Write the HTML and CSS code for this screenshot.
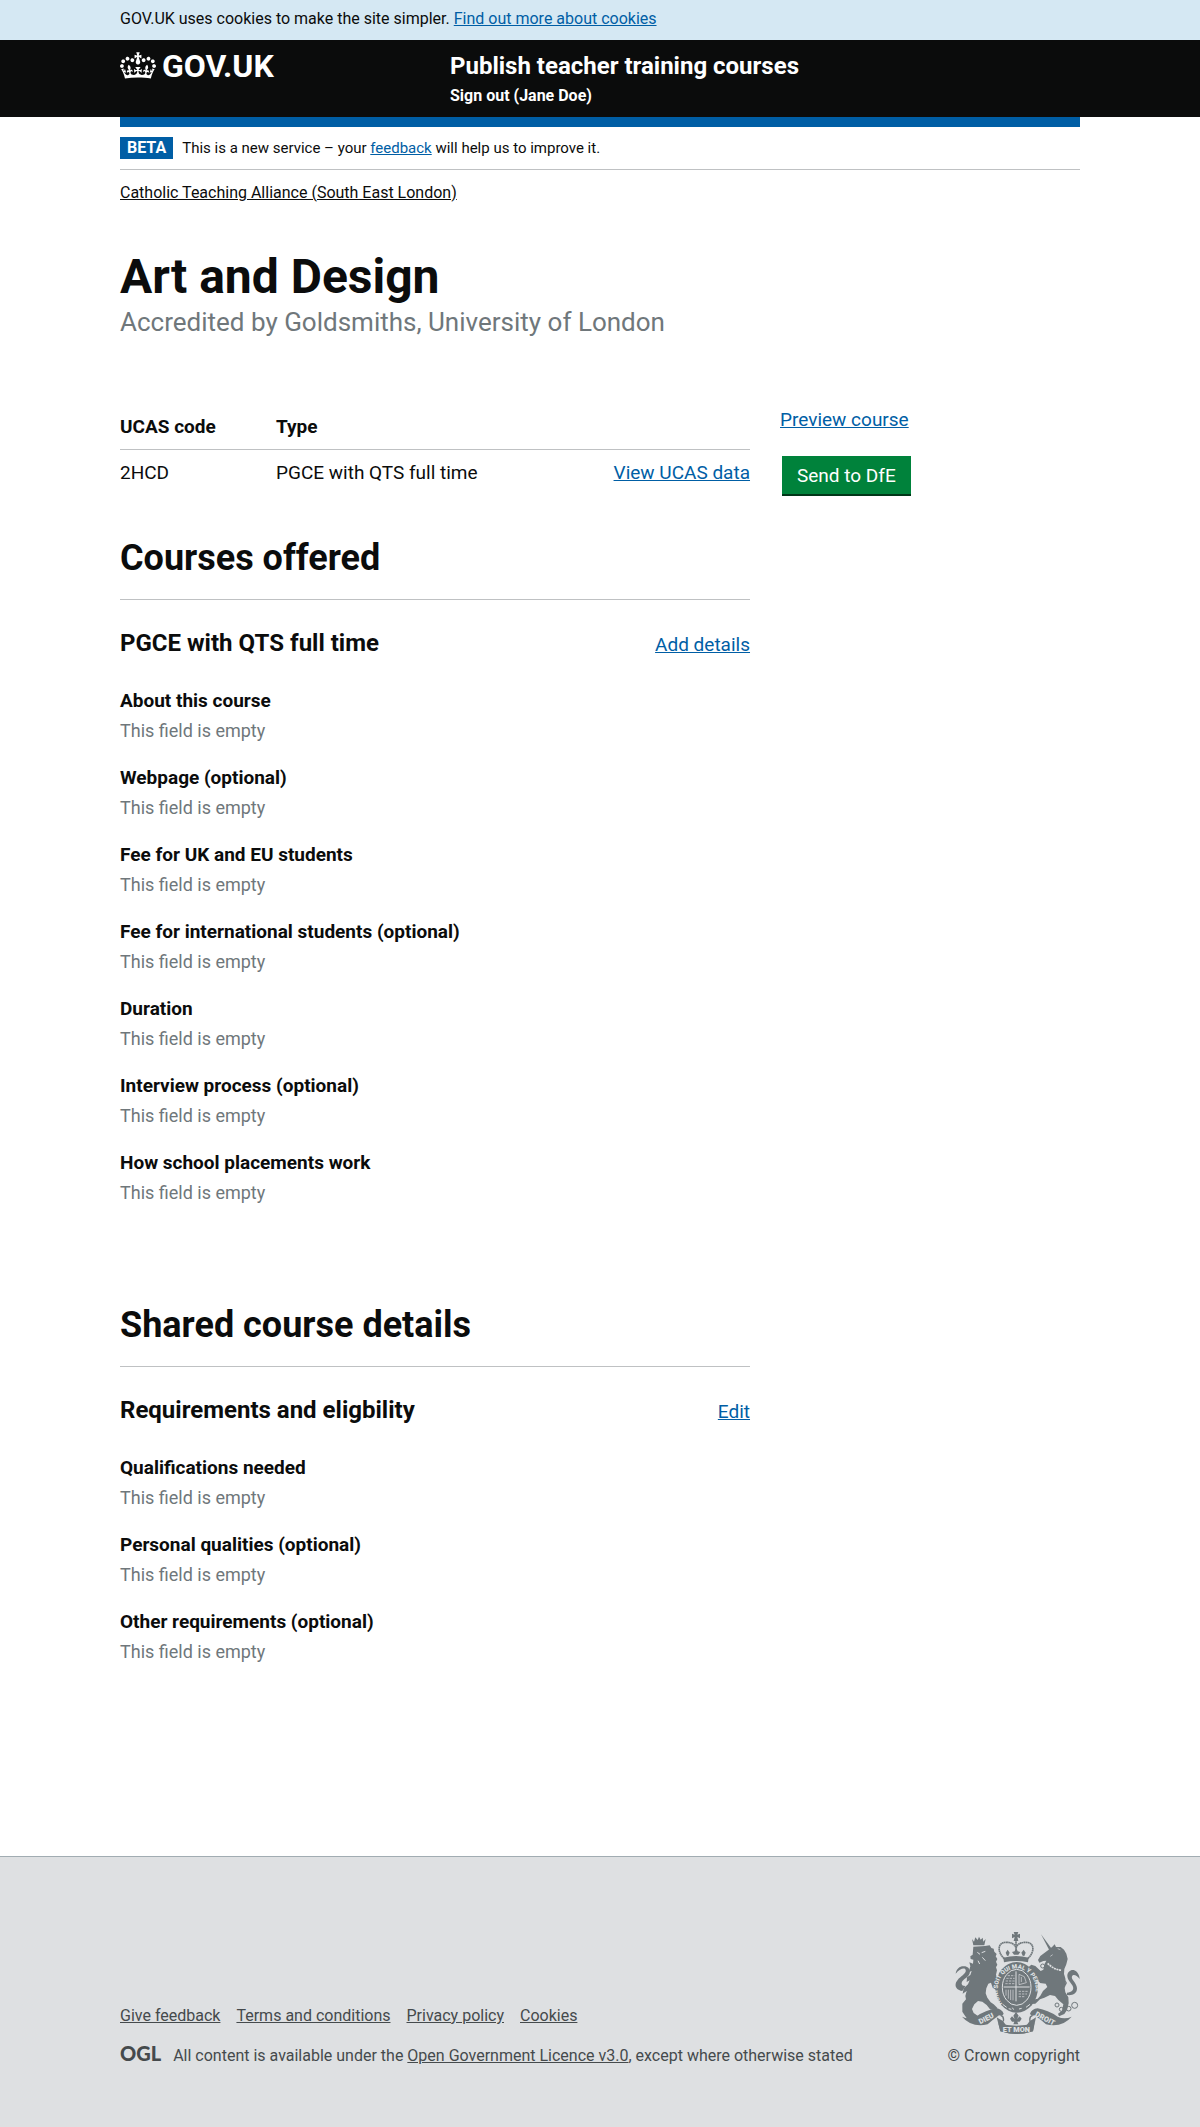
FILE: index.html
```html
<!DOCTYPE html>
<html lang="en">
<head>
<meta charset="utf-8">
<meta name="viewport" content="width=device-width, initial-scale=1">
<title>Art and Design – Publish teacher training courses</title>
<link rel="stylesheet" href="styles.css">
</head>
<body>
<div class="cookie-bar">
  <p class="container">GOV.UK uses cookies to make the site simpler. <a class="link" href="#">Find out more about cookies</a></p>
</div>

<header class="header">
  <div class="container header-grid">
    <a class="logo" href="#">
      <svg class="crown" viewBox="0 0 132 97" aria-hidden="true"><path fill="currentColor" fill-rule="evenodd" d="M25 30.2c3.5 1.5 7.7-.2 9.1-3.7 1.5-3.6-.2-7.8-3.9-9.2-3.6-1.4-7.6.3-9.1 3.9-1.4 3.5.3 7.5 3.9 9zM9 39.5c3.6 1.5 7.8-.2 9.2-3.7 1.5-3.6-.2-7.8-3.9-9.1-3.6-1.5-7.6.2-9.1 3.8-1.4 3.5.3 7.5 3.8 9zM4.4 57.2c3.5 1.5 7.7-.2 9.1-3.8 1.5-3.6-.2-7.7-3.9-9.1-3.5-1.5-7.6.3-9.1 3.8-1.4 3.5.3 7.6 3.9 9.1zm38.3-21.4c3.5 1.5 7.7-.2 9.1-3.8 1.5-3.6-.2-7.7-3.9-9.1-3.6-1.5-7.6.3-9.1 3.8-1.3 3.6.4 7.7 3.9 9.1zm64.4-5.6c-3.6 1.5-7.8-.2-9.1-3.7-1.5-3.6.2-7.8 3.8-9.2 3.6-1.4 7.7.3 9.2 3.9 1.3 3.5-.4 7.5-3.9 9zm15.9 9.3c-3.6 1.5-7.7-.2-9.1-3.7-1.5-3.6.2-7.8 3.7-9.1 3.6-1.5 7.7.2 9.2 3.8 1.5 3.5-.3 7.5-3.8 9zm4.7 17.7c-3.6 1.5-7.8-.2-9.2-3.8-1.5-3.6.2-7.7 3.9-9.1 3.6-1.5 7.7.3 9.2 3.8 1.3 3.5-.4 7.6-3.9 9.1zM89.3 35.8c-3.6 1.5-7.8-.2-9.2-3.8-1.4-3.6.2-7.7 3.9-9.1 3.6-1.5 7.7.3 9.2 3.8 1.4 3.6-.3 7.7-3.9 9.1zM69.7 17.7l8.9 4.7V9.3l-8.9 2.8c-.2-.3-.5-.6-.9-.9L72.4 0H59.6l3.5 11.2c-.3.3-.6.5-.9.9l-8.8-2.8v13.1l8.8-4.7c.3.3.6.7.9.9l-5 15.4v.1c-.2.8-.4 1.6-.4 2.4 0 4.1 3.1 7.5 7 8.1h.2c.3 0 .7.1 1 .1.4 0 .7 0 1-.1h.2c4-.6 7.1-4.1 7.1-8.1 0-.8-.1-1.7-.4-2.4V34l-5.1-15.4c.4-.2.7-.6 1-.9zM66 92.8c16.9 0 32.8 1.1 47.1 3.2 4-16.9 8.9-26.7 14-33.5l-9.6-3.4c1 4.9 1.1 7.2 0 10.2-1.5-1.4-3-4.3-4.2-8.7L108.6 76c2.8-2 5-3.2 7.5-3.3-4.4 9.4-10 11.9-13.6 11.2-4.3-.8-6.3-4.6-5.6-7.9 1-4.7 5.7-5.9 8-.5 4.3-8.7-3-11.4-7.6-8.8 7.1-7.2 7.9-13.5 2.1-21.1-8 6.1-8.1 12.3-4.5 20.8-4.7-5.4-12.1-2.5-9.5 6.2 3.4-5.2 7.9-2 7.2 3.1-.6 4.3-6.4 7.8-13.5 7.2-10.3-.9-10.9-8-11.2-13.8 2.5-.5 7.1 1.8 11 7.3L80.2 60c-4.1 4.4-8 5.3-12.3 5.4 1.4-4.4 8-11.6 8-11.6H55.5s6.4 7.2 7.9 11.6c-4.2-.1-8-1-12.3-5.4l1.4 16.4c3.9-5.5 8.5-7.7 10.9-7.3-.3 5.8-.9 12.8-11.1 13.8-7.2.6-12.9-2.9-13.5-7.2-.7-5 3.8-8.3 7.1-3.1 2.7-8.7-4.6-11.6-9.4-6.2 3.7-8.5 3.6-14.7-4.6-20.8-5.8 7.6-5 13.9 2.2 21.1-4.7-2.6-11.9.1-7.7 8.8 2.3-5.5 7.1-4.2 8.1.5.7 3.3-1.3 7.1-5.7 7.9-3.5.7-9-1.8-13.5-11.2 2.5.1 4.7 1.3 7.5 3.3l-4.7-15.4c-1.2 4.4-2.7 7.2-4.3 8.7-1.1-3-.9-5.3 0-10.2l-9.5 3.4c5 6.9 9.9 16.7 14 33.5 14.8-2.1 30.8-3.2 47.7-3.2z"/></svg>
      <span>GOV.UK</span>
    </a>
    <div class="header-content">
      <a class="service-name" href="#">Publish teacher training courses</a>
      <a class="sign-out" href="#">Sign out (Jane Doe)</a>
    </div>
  </div>
</header>

<div class="container">
  <div class="phase-banner">
    <strong class="tag">BETA</strong>
    <span>This is a new service – your <a class="link" href="#">feedback</a> will help us to improve it.</span>
  </div>
  <nav class="breadcrumb"><a href="#">Catholic Teaching Alliance (South East London)</a></nav>

  <main>
    <h1 class="title">Art and Design</h1>
    <p class="caption">Accredited by Goldsmiths, University of London</p>

    <div class="columns">
      <div class="primary">
        <table class="summary">
          <thead>
            <tr><th scope="col" class="code">UCAS code</th><th scope="col">Type</th><td></td></tr>
          </thead>
          <tbody>
            <tr><td>2HCD</td><td>PGCE with QTS full time</td><td class="action"><a class="link" href="#">View UCAS data</a></td></tr>
          </tbody>
        </table>

        <section class="section">
          <h2 class="section-title">Courses offered</h2>
          <div class="subhead"><h3>PGCE with QTS full time</h3><a class="link" href="#">Add details</a></div>
          <dl class="fields">
            <div><dt>About this course</dt><dd>This field is empty</dd></div>
            <div><dt>Webpage (optional)</dt><dd>This field is empty</dd></div>
            <div><dt>Fee for UK and EU students</dt><dd>This field is empty</dd></div>
            <div><dt>Fee for international students (optional)</dt><dd>This field is empty</dd></div>
            <div><dt>Duration</dt><dd>This field is empty</dd></div>
            <div><dt>Interview process (optional)</dt><dd>This field is empty</dd></div>
            <div><dt>How school placements work</dt><dd>This field is empty</dd></div>
          </dl>
        </section>

        <section class="section">
          <h2 class="section-title">Shared course details</h2>
          <div class="subhead"><h3>Requirements and eligbility</h3><a class="link" href="#">Edit</a></div>
          <dl class="fields">
            <div><dt>Qualifications needed</dt><dd>This field is empty</dd></div>
            <div><dt>Personal qualities (optional)</dt><dd>This field is empty</dd></div>
            <div><dt>Other requirements (optional)</dt><dd>This field is empty</dd></div>
          </dl>
        </section>
      </div>

      <aside class="side">
        <a class="link" href="#">Preview course</a>
        <button class="button" type="button">Send to DfE</button>
      </aside>
    </div>
  </main>
</div>

<footer class="footer">
  <div class="container footer-grid">
    <div class="footer-meta">
      <ul class="footer-links">
        <li><a href="#">Give feedback</a></li>
        <li><a href="#">Terms and conditions</a></li>
        <li><a href="#">Privacy policy</a></li>
        <li><a href="#">Cookies</a></li>
      </ul>
      <div class="licence">
        <span class="ogl">OGL</span>
        <span>All content is available under the <a href="#">Open Government Licence v3.0</a>, except where otherwise stated</span>
      </div>
    </div>
    <a class="copyright" href="#">
      <svg class="crest" viewBox="75 66 375 306" aria-hidden="true">
        <defs>
          <path id="garter" d="M220 284 C190 252 198 181 260 175 C322 181 330 252 300 284"/>
        </defs>
        <g fill="#6f777b">
          <!-- lion -->
          <path d="M126 87l6 8 4-13 7 8 4-10 5 9 6-6 2 12 7-8-4 19h-33z"/>
          <path d="M130 110l35-2 14-2 5 8 7 2 2 9 7 7-3 7 5 8-4 8 4 9-4 8 3 9-3 13 4 12 3 8-8 2 7 10-4 15-12-8-5-15-8 3-6 14-2 15 5 13 10 14 9 6 12 12-9 6-14-3-10-13-13-10-13-2-11 10-7 14 5 12 14 10 4 10-18 3-17-2-9-13-8-12v-24l11-13-2-10 4-15-12 8 3-16 13-12 5-12-9 5 1-14 10-7 4-12-9 4 5-18-3-12 11 4 1-12-8-2-1-8 7-5z"/>
          <path d="M97 243c-24-4-24-22-14-33 9-12 27-19 24-30-3-8-16-5-30 11 2-15 13-23 25-22 15 0 22 14 15 25-6 10-20 14-22 25-1 6 4 9 11 9z"/>
          <!-- unicorn -->
          <path d="M333 73l32 43-7 5z"/>
          <path d="M355 120l12-10 7-7 4 8 14 0 10 8 7 12 4 16-4 16-6 14-1 15 4 13 2 18-4 11 2 13 9 15 1 18-5 20-8 12-16 7-3-8 12-9 4-19-15-13-10-12-15-3-17 8-13 5-14 13-16 1 9-13 14-3 8-9 8-14 13-12-5-10-17-2-10-12-12-2-3-13-11-7 2-14 8-7 12 4 16 15 8-4 4-18 5-9-9 1-12 5-4-8 7-12z"/>
          <path d="M411 248c14-2 21-8 18-18-4-11-16-17-17-32 0-15 16-24 28-13 5 5 9 13 9 22-9-11-19-16-23-8-4 10 14 19 15 36 0 17-14 22-30 20z"/>
          <!-- royal crown -->
          <path d="M251 66h14l-3 8 8-3v14l-8-4 3 12h-14l3-12-8 4V71l8 3z"/>
          <path d="M220 143q38-10 76 0l-2 14q-36-8-72 0z"/>
          <path d="M231 137l-4-9 6-9 6 9-4 10zM252 134l-6-8 8-2 4-13 5 13 8 2-6 8zM278 137l-4-9 7-9 6 9-4 10z"/>
          <!-- garter -->
          <ellipse cx="260" cy="232" rx="64" ry="76"/>
        </g>
        <path fill="none" stroke="#6f777b" stroke-width="5" stroke-dasharray="5 1" d="M223 146C201 126 202 97 228 97c15 0 25 4 30 16 5-12 15-16 30-16 26 0 27 29 5 49M258 88v24"/>
        <ellipse cx="260" cy="232" rx="43" ry="54" fill="#6f777b" stroke="#dee0e2" stroke-width="3"/>
        <g fill="none" stroke="#dee0e2" stroke-width="3">
          <path d="M258 184v90M221 231h78"/>
          <path stroke-width="2" stroke-dasharray="7 3" d="M233 197h21M229 205h25M227 213h27M226 221h28M266 244h27M266 252h25M266 260h20"/>
          <path stroke-width="2" d="M267 193l16 7 6 18-22 6zM274 201v15M228 239v18M235 239v27M242 239v31M249 239v32"/>
          <path d="M218 283l12 9M236 296l8 2M247 293l4 6M267 297l8-2M288 292l12-9"/>
          <path d="M142 127l8 6M155 128l11-4M157 142l9 10M144 152l5 10"/>
          <path stroke-width="5" stroke-dasharray="6 2" d="M353 160q17 18 41 21"/>
          <path stroke-width="2" d="M383 116l8 3M361 139l7-5"/>
        </g>
        <text class="motto" fill="#dee0e2" font-size="18"><textPath href="#garter" startOffset="4">HONI SOIT QUI MAL Y PENSE</textPath></text>
        <g fill="none" stroke="#6f777b" stroke-width="3">
          <circle cx="403" cy="219" r="6"/><circle cx="398" cy="246" r="6"/><circle cx="381" cy="285" r="6"/><circle cx="394" cy="298" r="6"/><circle cx="416" cy="296" r="7"/><circle cx="434" cy="286" r="9"/><circle cx="338" cy="168" r="6"/>
        </g>
        <!-- scroll -->
        <g fill="#6f777b">
          <path d="M96 320q22 9 42 0 30-20 60-25 18 2 23 16-3 8-14 5-18 13-34 27-48 11-77-23z"/>
          <path d="M425 320q-22 9-42 0-30-20-60-25-18 2-23 16 3 8 14 5 18 13 34 27 48 11 77-23z"/>
          <path d="M200 322q10 7 19 11l10 14q30 5 60 0l10-14q10-4 19-11l-9 42q-49 16-98 0z"/>
          <path d="M205 340q54 14 108 0l-4 24q-49 16-98 0z"/>
          <path d="M258 306l8 11-5 10 8-8 6 7-6 9h-7l3 8h-15l3-8h-7l-6-9 6-7 8 8-4-10z"/>
        </g>
        <path fill="none" stroke="#6f777b" stroke-width="4" d="M212 316q11 3 8 18M308 316q-11 3-8 18"/>
        <g class="motto" fill="#dee0e2" font-size="22" text-anchor="middle">
          <text transform="translate(172 332) rotate(-27)">DIEU</text>
          <text x="259" y="367">ET MON</text>
          <text transform="translate(342 332) rotate(28)">DROIT</text>
        </g>
      </svg>
      <span>© Crown copyright</span>
    </a>
  </div>
</footer>
</body>
</html>
```
FILE: styles.css
```css
* { box-sizing: border-box; }

body {
  margin: 0;
  min-height: 100vh;
  display: flex;
  flex-direction: column;
  background: #fff;
  color: #0b0c0c;
  font: 16px/20px Roboto, "Liberation Sans", sans-serif;
}

h1, h2, h3, p, dl, dd, ul { margin: 0; padding: 0; }

h1, h2, h3, dt, th, .tag, .logo, .service-name, .sign-out { font-weight: 700; }

.container {
  width: calc(100% - 60px);
  max-width: 960px;
  margin: 0 auto;
}

.link { color: #005ea5; }

.cookie-bar { background: #d5e8f3; padding: 9px 0 11px; }

.header { background: #0b0c0c; padding: 9px 0 8px; }
.header a { color: #fff; text-decoration: none; }
.header-grid {
  display: grid;
  grid-template-columns: calc((100% - 60px) / 3) 1fr;
  column-gap: 30px;
}
.logo {
  display: flex;
  align-items: flex-start;
  gap: 6px;
  font-size: 32px;
  line-height: 34px;
}
.crown { width: 36px; height: 27px; margin-top: 3px; }
.header-content { display: flex; flex-direction: column; }
.service-name { font-size: 24px; line-height: 34px; }
.sign-out { line-height: 26px; }

.phase-banner {
  display: flex;
  align-items: center;
  gap: 9px;
  padding: 10px 0;
  border-top: 10px solid #005ea5;
  border-bottom: 1px solid #bfc1c3;
  font-size: 15px;
}
.tag {
  background: #005ea5;
  color: #fff;
  font-size: 16px;
  line-height: 22px;
  padding: 0 7px;
}

.breadcrumb { margin-top: 13px; }
.breadcrumb a { color: inherit; }

.title { margin-top: 46px; font-size: 48px; line-height: 56px; }
.caption { color: #6f777b; font-size: 26px; line-height: 34px; }

.columns {
  display: grid;
  grid-template-columns: 1fr calc((100% - 60px) / 3);
  column-gap: 30px;
  margin-top: 65px;
  font-size: 19px;
  line-height: 25px;
}

.summary { width: 100%; border-collapse: collapse; }
.summary th, .summary td { padding: 10px 0; text-align: left; }
.summary thead { border-bottom: 1px solid #bfc1c3; }
.summary .code { width: 156px; }
.summary .action { text-align: right; }

.section { margin-bottom: 97px; }
.section-title {
  padding-bottom: 21px;
  border-bottom: 1px solid #bfc1c3;
  font-size: 36px;
  line-height: 40px;
}
.summary + .section { margin-top: 43px; }

.subhead {
  display: flex;
  justify-content: space-between;
  align-items: baseline;
  margin: 28px 0;
}
.subhead h3 { font-size: 24px; line-height: 30px; }

.fields { display: grid; gap: 17px; }
.fields dt { line-height: 30px; }
.fields dd { color: #6f777b; font-size: 18px; line-height: 30px; }

.side {
  display: flex;
  flex-direction: column;
  align-items: flex-start;
  gap: 24px;
  padding-top: 3px;
}
.button {
  margin: 0 2px;
  padding: 7px 15px 6px;
  border: 0;
  border-bottom: 2px solid #003618;
  background: #00823b;
  color: #fff;
  font: inherit;
}

.footer {
  flex-grow: 1;
  margin-top: 92px;
  padding: 75px 0 60px;
  border-top: 1px solid #a1acb2;
  background: #dee0e2;
  color: #454a4c;
}
.footer a { color: inherit; }
.footer-grid { display: flex; justify-content: space-between; align-items: flex-end; gap: 30px; }
.footer-links { display: flex; flex-wrap: wrap; gap: 0 16px; list-style: none; }
.licence { display: flex; align-items: baseline; gap: 12px; margin-top: 17px; }
.ogl { font-family: Lato, sans-serif; font-size: 20px; font-weight: 900; }
.footer .copyright {
  display: flex;
  flex-direction: column;
  align-items: flex-end;
  gap: 12px;
  text-decoration: none;
}
.crest { width: 125px; height: 102px; }
.motto { font-weight: 900; }
```
